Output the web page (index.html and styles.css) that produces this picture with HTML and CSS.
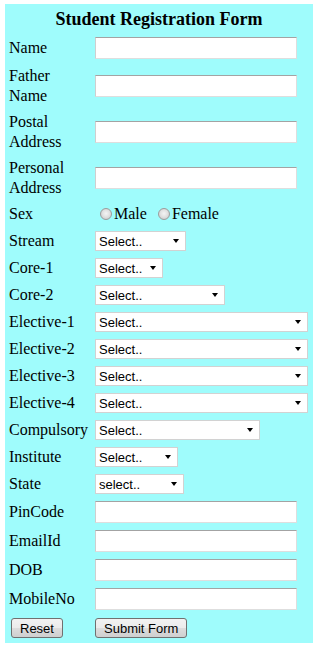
FILE: index.html
```html
<!DOCTYPE html>
<html lang="en">
<head>
  <meta charset="UTF-8" />
  <title>Student Registration Form</title>
  <link rel="stylesheet" href="styles.css">
</head>
<body>
  <form class="reg-form" id="regForm">
    <h2 class="title">Student Registration Form</h2>

    <label class="field-label" for="name">Name</label>
    <input type="text" class="text-input" id="name" name="name" />

    <label class="field-label" for="fatherName">Father Name</label>
    <input type="text" class="text-input" id="fatherName" name="fatherName" />

    <label class="field-label" for="postalAddress">Postal Address</label>
    <input type="text" class="text-input" id="postalAddress" name="postalAddress" />

    <label class="field-label" for="personalAddress">Personal Address</label>
    <input type="text" class="text-input" id="personalAddress" name="personalAddress" />

    <span class="field-label">Sex</span>
    <div class="radio-group">
      <label class="radio"><input type="radio" name="sex" value="male" />Male</label>
      <label class="radio"><input type="radio" name="sex" value="female" />Female</label>
    </div>

    <label class="field-label" for="stream">Stream</label>
    <span class="select-wrap w-stream">
      <select id="stream" name="stream">
        <option value="">Select..</option>
      </select>
    </span>

    <label class="field-label" for="core1">Core-1</label>
    <span class="select-wrap w-core1">
      <select id="core1" name="core1">
        <option value="">Select..</option>
      </select>
    </span>

    <label class="field-label" for="core2">Core-2</label>
    <span class="select-wrap w-core2">
      <select id="core2" name="core2">
        <option value="">Select..</option>
      </select>
    </span>

    <label class="field-label" for="elective1">Elective-1</label>
    <span class="select-wrap w-wide">
      <select id="elective1" name="elective1">
        <option value="">Select..</option>
      </select>
    </span>

    <label class="field-label" for="elective2">Elective-2</label>
    <span class="select-wrap w-wide">
      <select id="elective2" name="elective2">
        <option value="">Select..</option>
      </select>
    </span>

    <label class="field-label" for="elective3">Elective-3</label>
    <span class="select-wrap w-wide">
      <select id="elective3" name="elective3">
        <option value="">Select..</option>
      </select>
    </span>

    <label class="field-label" for="elective4">Elective-4</label>
    <span class="select-wrap w-wide">
      <select id="elective4" name="elective4">
        <option value="">Select..</option>
      </select>
    </span>

    <label class="field-label" for="compulsory">Compulsory</label>
    <span class="select-wrap w-compulsory">
      <select id="compulsory" name="compulsory">
        <option value="">Select..</option>
      </select>
    </span>

    <label class="field-label" for="institute">Institute</label>
    <span class="select-wrap w-institute">
      <select id="institute" name="institute">
        <option value="">Select..</option>
      </select>
    </span>

    <label class="field-label" for="state">State</label>
    <span class="select-wrap w-state">
      <select id="state" name="state">
        <option value="">select..</option>
      </select>
    </span>

    <label class="field-label" for="pinCode">PinCode</label>
    <input type="text" class="text-input" id="pinCode" name="pinCode" />

    <label class="field-label" for="emailId">EmailId</label>
    <input type="text" class="text-input" id="emailId" name="emailId" />

    <label class="field-label" for="dob">DOB</label>
    <input type="text" class="text-input" id="dob" name="dob" />

    <label class="field-label" for="mobileNo">MobileNo</label>
    <input type="text" class="text-input" id="mobileNo" name="mobileNo" />

    <div class="btn-cell btn-cell-left">
      <button type="reset" class="btn">Reset</button>
    </div>
    <div class="btn-cell">
      <button type="submit" class="btn">Submit Form</button>
    </div>
  </form>
</body>
</html>
```

FILE: styles.css
```css
body {
  margin: 0;
  background: #fff;
  font-family: "Liberation Serif", "Times New Roman", serif;
  color: #000;
}

.reg-form {
  box-sizing: border-box;
  width: 308px;
  margin: 4px 0 0 5px;
  padding: 5px 4px 4px;
  background: #9ffcfc;
  display: grid;
  grid-template-columns: 80px 214px;
  column-gap: 6px;
  row-gap: 7px;
  align-items: center;
}

.title {
  grid-column: 1 / -1;
  margin: 0;
  text-align: center;
  font-size: 18px;
  font-weight: bold;
  line-height: normal;
}

.field-label {
  font-size: 16px;
  line-height: 19.5px;
}

.text-input {
  justify-self: start;
  box-sizing: border-box;
  width: 202px;
  height: 22px;
  margin: 0;
  padding: 1px 3px;
  border: 1px solid #dedede;
  border-top-color: #a3a3a3;
  border-left-color: #cfcfcf;
  background: #fff;
  font: 13px "Liberation Sans", Arial, sans-serif;
}

.text-input:focus {
  outline: none;
}

/* selects */
.select-wrap {
  position: relative;
  justify-self: start;
  height: 20px;
}

.select-wrap select {
  appearance: none;
  -webkit-appearance: none;
  display: block;
  box-sizing: border-box;
  width: 100%;
  height: 20px;
  margin: 0;
  padding: 0 0 0 3px;
  border: 1px solid #d2d2d2;
  border-radius: 0;
  background: #fff;
  color: #000;
  font: 13px "Liberation Sans", Arial, sans-serif;
}

.select-wrap::after {
  content: "";
  position: absolute;
  right: 7px;
  top: 8px;
  border-left: 3px solid transparent;
  border-right: 3px solid transparent;
  border-top: 4px solid #000;
  pointer-events: none;
}

.w-stream { width: 91px; }
.w-core1 { width: 68px; }
.w-core2 { width: 130px; }
.w-wide { width: 213px; }
.w-compulsory { width: 165px; }
.w-institute { width: 83px; }
.w-state { width: 89px; }

/* radios */
.radio-group {
  display: flex;
  align-items: center;
  gap: 6px;
  height: 20px;
  font-size: 16px;
}

.radio {
  display: inline-flex;
  align-items: center;
}

.radio input {
  appearance: none;
  -webkit-appearance: none;
  box-sizing: border-box;
  width: 12px;
  height: 12px;
  margin: 0 2px 0 5px;
  border: 1px solid #9c9c9c;
  border-radius: 50%;
  background: radial-gradient(circle at 50% 45%, #f4f4f4 0, #e2e2e2 45%, #c4c4c4 100%);
}

/* buttons */
.btn-cell {
  justify-self: start;
}

.btn-cell-left {
  padding-left: 2px;
}

.btn {
  display: block;
  height: 20px;
  margin: 1px 0;
  padding: 0 8px;
  border: 1px solid #707070;
  border-radius: 3px;
  background: linear-gradient(#f2f2f2 0%, #ebebeb 50%, #dddddd 50%, #cfcfcf 100%);
  color: #000;
  font: 13px "Liberation Sans", Arial, sans-serif;
  cursor: pointer;
}
```
